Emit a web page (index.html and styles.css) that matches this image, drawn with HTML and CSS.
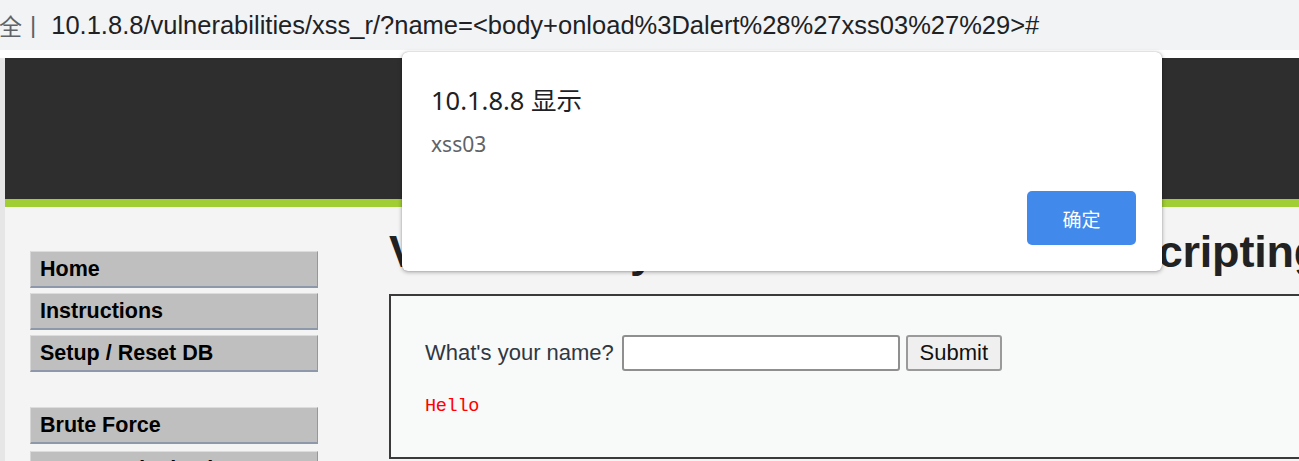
FILE: index.html
```html
<!DOCTYPE html>
<html>
<head>
<meta charset="utf-8">
<title>DVWA XSS</title>
<link rel="stylesheet" href="styles.css">
</head>
<body>
<div class="urlbar"><span class="secure">安全</span><span class="sep">|</span><span class="url">10.1.8.8/vulnerabilities/xss_r/?name=&lt;body+onload%3Dalert%28%27xss03%27%29&gt;#</span></div>
<div class="strip"></div>
<div class="page">
  <div class="header"></div>
  <div class="green"></div>
  <div class="main">
    <ul class="menu">
      <li class="item">Home</li>
      <li class="item">Instructions</li>
      <li class="item">Setup / Reset DB</li>
      <li class="item item-group">Brute Force</li>
      <li class="item">Command Injection</li>
    </ul>
    <div class="content">
      <h1 class="title">Vulnerability: Reflected Cross Site Scripting (XSS)</h1>
      <div class="vbox">
        <form class="form">
          <label class="label">What's your name?</label>
          <input class="field" type="text">
          <button class="submit" type="button">Submit</button>
        </form>
        <pre class="hello">Hello</pre>
      </div>
    </div>
  </div>
</div>
<div class="dialog">
  <div class="dlg-title">10.1.8.8 显示</div>
  <div class="dlg-msg">xss03</div>
  <div class="dlg-actions"><button class="dlg-ok" type="button">确定</button></div>
</div>
</body>
</html>
```

FILE: styles.css
```css
html, body {
  margin: 0;
  padding: 0;
}
body {
  width: 1299px;
  height: 461px;
  overflow: hidden;
  background: #f4f4f4;
  font-family: "Liberation Sans", Arial, sans-serif;
  position: relative;
}
.urlbar {
  height: 50px;
  background: #f1f3f4;
  display: flex;
  align-items: center;
  white-space: nowrap;
  overflow: hidden;
  font-family: "Liberation Sans", "Noto Sans CJK SC", sans-serif;
  font-size: 25.5px;
  color: #202124;
}
.secure {
  margin-left: -24px;
  color: #5f6368;
  font-family: "Noto Sans CJK SC", sans-serif;
  font-size: 23px;
}
.sep {
  color: #5f6368;
  margin: 0 15px 0 8px;
  font-size: 24px;
}
.strip {
  height: 8px;
  background: #ffffff;
}
.page {
  border-left: 5px solid #e6e6e6;
}
.header {
  height: 141px;
  background: #2e2e2e;
}
.green {
  height: 8px;
  background: #a1cd35;
}
.main {
  display: flex;
  height: 260px;
}
.menu {
  list-style: none;
  margin: 44px 0 0 25px;
  padding: 0;
  width: 288px;
  flex: none;
}
.item {
  box-sizing: border-box;
  height: 37px;
  margin-bottom: 5px;
  background: #bfbfbf;
  border-top: 1px solid #dcdcdc;
  border-left: 1px solid #d6d6d6;
  border-right: 1px solid #8d99aa;
  border-bottom: 2px solid #8d99aa;
  padding-left: 9px;
  font-weight: bold;
  font-size: 21.5px;
  line-height: 35px;
  color: #000;
  white-space: nowrap;
  overflow: hidden;
}
.item:nth-child(3) {
  margin-top: 1px;
}
.item-group {
  margin-top: 35px;
  margin-bottom: 7px;
}
.content {
  margin-left: 71px;
  flex: 1;
  min-width: 0;
}
.title {
  margin: 18px 0 15px;
  font-size: 45px;
  line-height: 54px;
  font-weight: bold;
  color: #222;
  white-space: nowrap;
  letter-spacing: -0.2px;
  font-family: "Liberation Sans", Arial, sans-serif;
}
.vbox {
  width: 1000px;
  height: 165px;
  box-sizing: border-box;
  border: 2px solid #3a3a3a;
  background: #f8f9f9;
  padding: 39px 34px 0;
}
.form {
  display: flex;
  align-items: center;
  margin: 0;
}
.label {
  font-size: 22px;
  color: #2e3742;
  margin-right: 8px;
}
.field {
  box-sizing: border-box;
  width: 278px;
  height: 36px;
  border: 2px solid #8f8f8f;
  border-radius: 3px;
  background: #fff;
  margin: 0 6px 0 0;
}
.submit {
  box-sizing: border-box;
  width: 96px;
  height: 36px;
  border: 2px solid #9a9a9a;
  border-radius: 3px;
  background: #efefef;
  font-family: "Liberation Sans", Arial, sans-serif;
  font-size: 22px;
  color: #111;
  padding: 0;
}
.hello {
  margin: 25px 0 0;
  font-family: "Liberation Mono", monospace;
  font-size: 18.5px;
  line-height: 22px;
  letter-spacing: -0.3px;
  color: #ff0000;
}
.dialog {
  position: absolute;
  left: 402px;
  top: 52px;
  width: 760px;
  height: 219px;
  box-sizing: border-box;
  background: #fff;
  border-radius: 6px;
  box-shadow: 0 1px 4px rgba(0,0,0,0.35), 0 0 1px rgba(0,0,0,0.3);
  padding: 32px 26px 0 29px;
  font-family: "Noto Sans", "Noto Sans CJK SC", sans-serif;
}
.dlg-title {
  font-size: 25.5px;
  line-height: 32px;
  color: #202124;
}
.dlg-msg {
  margin-top: 14px;
  font-size: 21px;
  line-height: 28px;
  color: #5f6368;
}
.dlg-actions {
  display: flex;
  justify-content: flex-end;
  margin-top: 33px;
}
.dlg-ok {
  width: 109px;
  height: 54px;
  border: none;
  border-radius: 5px;
  background: #418aeb;
  color: #fff;
  font-family: "Noto Sans CJK SC", sans-serif;
  font-size: 19px;
  padding: 0;
}
```
